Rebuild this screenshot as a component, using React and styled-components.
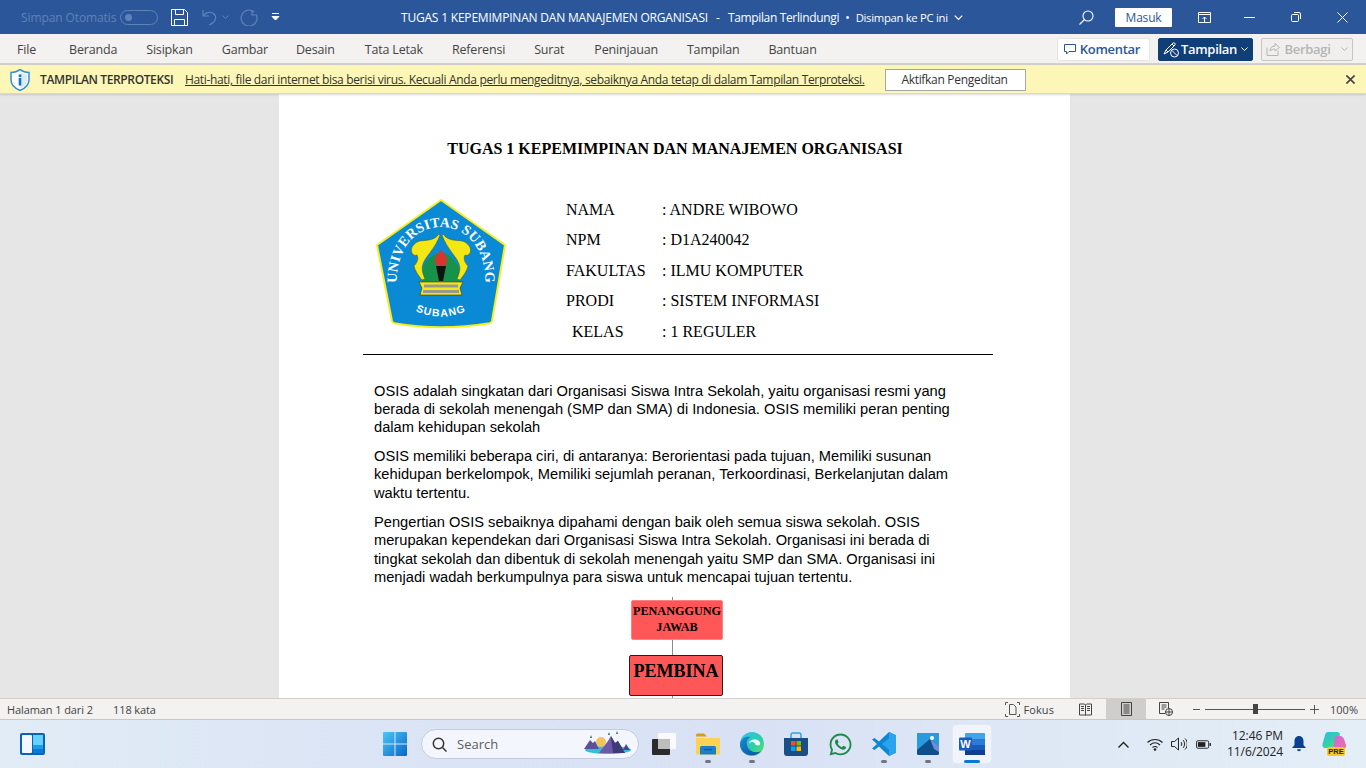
import styled, { createGlobalStyle } from "styled-components";
import { FaWhatsapp } from "react-icons/fa";

const uiFont = `"Open Sans", "Noto Sans", sans-serif`;

const Global = createGlobalStyle`
  html, body { margin: 0; padding: 0; height: 100%; overflow: hidden; }
  body { font-family: ${uiFont}; }
  #root { height: 768px; }
  svg { display: block; flex: none; }
`;

const Screen = styled.div`
  width: 1366px;
  height: 768px;
  display: flex;
  flex-direction: column;
  overflow: hidden;
`;

/* ---------- title bar ---------- */
const TitleBar = styled.header`
  height: 34px;
  flex: none;
  background: #2b579a;
  color: #fff;
  display: flex;
  align-items: center;
  font-size: 12px;
`;
const Qat = styled.div`
  width: 401px;
  flex: none;
  display: flex;
  align-items: center;
  padding-left: 21px;
  box-sizing: border-box;
`;
const AutoSave = styled.span`
  color: #5f83b9;
  width: 99px;
  letter-spacing: -0.1px;
`;
const Toggle = styled.span`
  width: 38px;
  height: 15px;
  box-sizing: border-box;
  border: 1px solid #5f83b9;
  border-radius: 8px;
  display: flex;
  align-items: center;
  padding-left: 4px;
  margin-right: 13px;
  &::before {
    content: "";
    width: 7px;
    height: 7px;
    border-radius: 50%;
    background: #5f83b9;
  }
`;
const Spaced = styled.span`
  margin-left: ${(p) => p.$gap || 0}px;
  display: flex;
`;
const DocTitle = styled.div`
  white-space: nowrap;
  display: flex;
  align-items: center;
`;
const TitlePart = styled.span`
  margin-left: ${(p) => p.$gap || 0}px;
  letter-spacing: ${(p) => p.$track}px;
  font-size: ${(p) => p.$size || 12}px;
`;
const TitleRight = styled.div`
  margin-left: auto;
  display: flex;
  align-items: center;
  padding-right: 18px;
`;
const SignIn = styled.button`
  width: 57px;
  height: 19px;
  margin: 0 26px 0 21px;
  padding: 0;
  border: 0;
  border-radius: 1px;
  background: #fff;
  color: #2b579a;
  font: 12px ${uiFont};
  letter-spacing: -0.2px;
`;

/* ---------- ribbon ---------- */
const Ribbon = styled.nav`
  height: 31px;
  flex: none;
  box-sizing: border-box;
  background: #f3f2f1;
  border-bottom: 2px solid #d2d0ce;
  display: flex;
  align-items: center;
  padding: 1px 13px 0 17px;
`;
const Tab = styled.span`
  font-size: 12.5px;
  color: #444;
  letter-spacing: -0.18px;
  margin-right: ${(p) => p.$gap || 29}px;
  white-space: nowrap;
`;
const RibbonActions = styled.div`
  margin-left: auto;
  display: flex;
  align-items: center;
  gap: 8px;
`;
const ActionButton = styled.div`
  height: 23px;
  width: ${(p) => p.$w}px;
  box-sizing: border-box;
  display: flex;
  align-items: center;
  justify-content: center;
  gap: ${(p) => p.$gap ?? 4}px;
  padding-right: ${(p) => p.$pad || 0}px;
  border-radius: 2px;
  font-size: 13px;
  font-weight: 600;
  letter-spacing: -0.3px;
  background: ${(p) => p.$bg};
  color: ${(p) => p.$color};
  border: 1px solid ${(p) => p.$border || p.$bg};
`;

/* ---------- protected view bar ---------- */
const InfoBar = styled.div`
  height: 29px;
  flex: none;
  box-sizing: border-box;
  background: #fcf7b6;
  border-bottom: 1px solid #e1dc9f;
  box-shadow: 0 1px 2px rgba(0, 0, 0, 0.14);
  display: flex;
  align-items: center;
  padding: 1px 11px 0 10px;
  font-size: 12px;
  color: #333;
  position: relative;
  z-index: 1;
`;
const InfoLabel = styled.span`
  margin-left: 10px;
  width: 145px;
  font-weight: 600;
  letter-spacing: -0.38px;
  white-space: nowrap;
`;
const InfoLink = styled.span`
  width: 700px;
  text-decoration: underline;
  letter-spacing: -0.335px;
  white-space: nowrap;
`;
const EnableButton = styled.button`
  width: 141px;
  height: 22px;
  padding: 0 2px 0 0;
  background: #fff;
  border: 1px solid #a6a6a6;
  color: #333;
  font: 12px ${uiFont};
  letter-spacing: -0.3px;
`;
const CloseX = styled.span`
  margin-left: auto;
  display: flex;
`;

/* ---------- document ---------- */
const Workspace = styled.main`
  flex: 1;
  min-height: 0;
  background: #e6e6e6;
  overflow: hidden;
  display: flex;
  padding-left: 279px;
`;
const Page = styled.article`
  width: 791px;
  height: 700px;
  flex: none;
  box-sizing: border-box;
  background: #fff;
  padding-top: 46px;
  font-family: "Liberation Serif", serif;
  color: #000;
`;
const DocHeading = styled.h1`
  margin: 0;
  font-size: 16px;
  line-height: 18px;
  font-weight: 700;
  text-align: center;
  padding-left: 1px;
`;
const Identity = styled.section`
  display: flex;
  margin: 35px 77px 0 84px;
  padding: 0 0 7px 13px;
  border-bottom: 1px solid #000;
  height: 154px;
`;
const LogoWrap = styled.div`
  width: 190px;
  flex: none;
  padding-top: 5px;
`;
const InfoGrid = styled.dl`
  margin: 1.7px 0 0;
  display: grid;
  grid-template-columns: 96px auto;
  grid-auto-rows: 30.5px;
  align-items: center;
  font-size: 16px;
`;
const Term = styled.dt`
  padding-left: ${(p) => (p.$indent ? 6 : 0)}px;
`;
const Value = styled.dd`
  margin: 0;
`;
const Body = styled.section`
  width: 590px;
  margin: 26.7px 0 0 95px;
  font-family: "Liberation Sans", sans-serif;
  font-size: 14.67px;
  line-height: 18.3px;
`;
const Para = styled.p`
  margin: 0 0 ${(p) => p.$after || 10.5}px;
`;
const OrgChart = styled.div`
  margin-top: 3px;
  display: flex;
  flex-direction: column;
  align-items: flex-start;
  padding-left: 350px;
`;
const OrgLine = styled.i`
  display: block;
  width: 1px;
  height: ${(p) => p.$h}px;
  background: #8a8a8a;
  margin-left: 43px;
`;
const OrgBox = styled.div`
  box-sizing: border-box;
  width: ${(p) => p.$w}px;
  height: ${(p) => p.$h}px;
  margin-left: ${(p) => p.$left || 0}px;
  background: #ff5757;
  border: ${(p) => (p.$strong ? "1px solid #222" : "1px solid #ff8080")};
  border-radius: 2px;
  display: flex;
  align-items: center;
  justify-content: center;
  text-align: center;
  font-weight: 700;
  font-size: ${(p) => p.$size}px;
  line-height: ${(p) => p.$line || 1.2};
  padding-bottom: ${(p) => (p.$strong ? 7 : 0)}px;
`;

/* ---------- status bar ---------- */
const StatusBar = styled.footer`
  height: 22px;
  flex: none;
  box-sizing: border-box;
  background: #f3f2f1;
  border-top: 1px solid #d2d0ce;
  border-bottom: 1px solid #c8c8c8;
  display: flex;
  align-items: center;
  font-size: 11px;
  color: #444;
  padding-left: 7px;
  position: relative;
  z-index: 1;
`;
const StatusText = styled.span`
  width: ${(p) => p.$w}px;
  letter-spacing: -0.1px;
  white-space: nowrap;
`;
const StatusRight = styled.div`
  margin-left: auto;
  display: flex;
  align-items: center;
  height: 100%;
  padding-right: 8px;
`;
const FocusLabel = styled.span`
  margin: 0 25px 0 3px;
  letter-spacing: 0.1px;
`;
const ViewButton = styled.span`
  width: 40px;
  align-self: stretch;
  margin: 0 13px 0 14px;
  display: flex;
  align-items: center;
  justify-content: center;
  background: #cfcecd;
`;
const ZoomSlider = styled.span`
  width: 100px;
  height: 1px;
  margin: 0 5px;
  background: #555;
  display: flex;
  align-items: center;
  justify-content: center;
  &::after {
    content: "";
    width: 5px;
    height: 10px;
    background: #444;
  }
`;
const ZoomValue = styled.span`
  margin-left: 11px;
`;

/* ---------- taskbar ---------- */
const Taskbar = styled.div`
  height: 48px;
  flex: none;
  display: flex;
  align-items: center;
  background: linear-gradient(90deg, #e1ecf6 0%, #dbe5f5 25%, #d9e2f5 55%, #dfe9f5 80%, #e3eef7 100%);
`;
const Widgets = styled.span`
  width: 383px;
  padding-left: 20px;
  box-sizing: border-box;
  flex: none;
`;
const Start = styled.span`
  width: 24px;
  flex: none;
  margin-right: 14px;
`;
const SearchBox = styled.div`
  width: 218px;
  height: 30px;
  box-sizing: border-box;
  flex: none;
  border-radius: 15px;
  background: #f3f6fd;
  border: 1px solid #c4cbe0;
  display: flex;
  align-items: center;
  padding: 0 4px 0 10px;
  font-size: 13px;
  color: #5d5d5d;
`;
const SearchLabel = styled.span`
  margin-left: 10px;
  flex: 1;
`;
const TaskSlot = styled.span`
  width: 44px;
  height: 38px;
  flex: none;
  margin-left: ${(p) => p.$offset || 0}px;
  display: flex;
  align-items: center;
  justify-content: center;
  position: relative;
  border-radius: 4px;
`;
const ActiveSlot = styled(TaskSlot)`
  width: 38px;
  margin: 0 3px;
  background: #f1f4fb;
  box-shadow: 0 0 0 1px #e4e9f3;
`;
const RunDot = styled.i`
  position: absolute;
  left: 50%;
  bottom: 0;
  transform: translateX(-50%);
  width: ${(p) => (p.$active ? 16 : 6)}px;
  height: 3px;
  border-radius: 2px;
  background: ${(p) => (p.$active ? "#0a78d6" : "#70757e")};
`;
const Tray = styled.div`
  margin-left: auto;
  display: flex;
  align-items: center;
  padding-right: 20px;
`;
const Clock = styled.div`
  width: 68px;
  margin-left: 4px;
  text-align: right;
  font-size: 12px;
  line-height: 16px;
  color: #222;
  letter-spacing: -0.1px;
`;

/* ---------- icons ---------- */
const Line = ({ w = 16, h = 16, vb, color = "#fff", sw = 1, children }) => (
  <svg width={w} height={h} viewBox={vb || `0 0 ${w} ${h}`} fill="none" stroke={color} strokeWidth={sw}>
    {children}
  </svg>
);

const SaveIcon = () => (
  <Line w={17} h={17}>
    <path d="M.5.5h13l3 3v13H.5zM4.500.5v5h8v-5M3.500 16.500v-6h10v6" />
  </Line>
);
const UndoIcon = () => (
  <Line w={17} h={17} color="#5f83b9" sw={1.2}>
    <path d="M1 1v6h6M1 7c3-4 8-5 11-2 3 3 2 8-5 11" />
  </Line>
);
const RedoIcon = () => (
  <Line w={18} h={17} color="#5f83b9" sw={1.2}>
    <path d="M12 1v5h5M16.500 6A8 8 0 1 1 9 1c2 0 4 1 5 2" />
  </Line>
);
const Chevron = ({ color = "#fff", w = 7, h = 4 }) => (
  <Line w={w} h={h} vb="0 0 7 4" color={color}>
    <path d="M.5.5l3 3 3-3" />
  </Line>
);
const ChevronUp = () => (
  <Line w={11} h={7} color="#222" sw={1.4}>
    <path d="M.5 6.500l5-5 5 5" />
  </Line>
);
const CustomizeIcon = () => (
  <Line w={9} h={8}>
    <path d="M1 .5h7" />
    <path d="M1 3.500l3.500 3.500L8 3.500z" fill="#fff" />
  </Line>
);
const SearchGlass = ({ color = "#fff", s = 15, sw = 1.1 }) => (
  <Line w={s} h={s} vb="0 0 15 15" color={color} sw={sw}>
    <circle cx="9" cy="6" r="5" />
    <path d="M5.500 9.500L.5 14.500" />
  </Line>
);
const TaskbarGlass = () => (
  <Line w={15} h={15} color="#333" sw={1.5}>
    <circle cx="6.500" cy="6.500" r="5.200" />
    <path d="M10.500 10.500l4 4" />
  </Line>
);
const PresentIcon = () => (
  <Line w={13} h={11}>
    <path d="M.5.5h12v10H.5zM.5 2.500h12" />
    <path d="M6.500 10V5M4.500 7l2-2 2 2" />
  </Line>
);
const MinimizeIcon = () => (
  <Line w={11} h={1}>
    <path d="M0 .5h11" />
  </Line>
);
const RestoreIcon = () => (
  <Line w={10} h={10}>
    <rect x=".5" y="2.500" width="7" height="7" rx="1" />
    <path d="M3 .5h5a1.500 1.500 0 0 1 1.500 1.500v5" />
  </Line>
);
const CloseIcon = ({ s = 11, color = "#fff", sw = 1 }) => (
  <Line w={s} h={s} vb="0 0 11 11" color={color} sw={sw}>
    <path d="M.5.5l10 10M10.500.5l-10 10" />
  </Line>
);
const CommentIcon = () => (
  <Line w={12} h={12} color="#2b579a">
    <path d="M.5 1.500h11v7H5l-2.500 2.500v-2.500h-2z" />
  </Line>
);
const EditViewIcon = () => (
  <svg width="17" height="17" viewBox="0 0 17 17" fill="none" stroke="#fff" strokeWidth="1">
    <path d="M1 13l2-4 7-7c1-1 3 1 2 2l-7 7z" />
    <path d="M3 9l2 2M9 3l2 2" />
    <circle cx="11.500" cy="12" r="4" fill="#103f78" />
    <path d="M8.800 9.300l5.400 5.400" />
  </svg>
);
const ShareIcon = () => (
  <Line w={14} h={14} color="#b5b5b5">
    <path d="M1 5.500v8h11v-5M4 9c0-3 2-5 5-5V1.500l4.500 4L9 9V7C7 7 5 8 4 9z" />
  </Line>
);
const ShieldIcon = () => (
  <svg width="20" height="22" viewBox="0 0 20 22">
    <path d="M10 .5c2.500 2 6 3 9 3v7.500c0 4.500-3.500 8-9 10.500C4.500 19 1 15.500 1 11V3.500c3 0 6.500-1 9-3z" fill="#fff" stroke="#2f8fdb" strokeWidth="1.500" />
    <path d="M10 3c2 1.300 4.500 2 7 2.300V11c0 3.500-3 6.500-7 8.500z" fill="#d5ecfb" />
    <rect x="8.700" y="5.500" width="2.600" height="2.600" fill="#1f6fb5" />
    <rect x="8.700" y="9" width="2.600" height="7.500" fill="#1f6fb5" />
  </svg>
);
const FocusIcon = () => (
  <svg width="15" height="15" viewBox="0 0 15 15" fill="none" stroke="#555">
    <path d="M.5 3V.5H3M12 .5h2.500V3M.5 12v2.500H3M12 14.500h2.500V12" />
    <path d="M4.500 12.500v-10h4l2.500 2.500v7.500z" />
  </svg>
);
const ReadIcon = () => (
  <Line w={13} h={13} color="#444">
    <path d="M.5 1h5l1 1 1-1h5v11h-5l-1 .5-1-.5h-5zM6.500 2v10M2 3.500h3M2 5.500h3M2 7.500h3M8 3.500h3M8 5.500h3M8 7.500h3" />
  </Line>
);
const PrintIcon = () => (
  <Line w={11} h={14} color="#444">
    <path d="M.5.5h10v13H.5zM2.500 3h6M2.500 5h6M2.500 7h6M2.500 9h6M2.500 11h6" />
  </Line>
);
const WebIcon = () => (
  <svg width="14" height="14" viewBox="0 0 14 14" fill="none" stroke="#444">
    <path d="M.5.5h9v7M.5.5v11h6M2.500 3h5M2.500 5h5M2.500 7h3" />
    <circle cx="10" cy="10" r="3.500" fill="#f3f2f1" />
    <path d="M6.500 10h7M10 6.500v7" />
  </svg>
);
const ZoomMinus = () => (
  <Line w={7} h={1} color="#555">
    <path d="M0 .5h7" />
  </Line>
);
const ZoomPlus = () => (
  <Line w={9} h={9} color="#555">
    <path d="M0 4.500h9M4.500 0v9" />
  </Line>
);
const WidgetsIcon = () => (
  <svg width="25" height="22" viewBox="0 0 25 22">
    <rect width="25" height="22" rx="2" fill="#0b63b4" />
    <rect x="2" y="2" width="10" height="18" rx="1" fill="#f4f8fb" />
    <rect x="13" y="2" width="10" height="10" fill="#64d2ff" />
    <rect x="13" y="12" width="10" height="4" fill="#1b9cf0" />
    <rect x="13" y="16" width="10" height="4" fill="#0a7bd4" />
  </svg>
);
const WinLogo = () => (
  <svg width="24" height="24" viewBox="0 0 24 24">
    <defs>
      <linearGradient id="win" x1="0" y1="0" x2="1" y2="1">
        <stop offset="0" stopColor="#4fc7f7" />
        <stop offset="1" stopColor="#0467c8" />
      </linearGradient>
    </defs>
    <path d="M0 1a1 1 0 0 1 1-1h10.500v11.500H0zM12.500 0H23a1 1 0 0 1 1 1v10.500H12.500zM0 12.500h11.500V24H1a1 1 0 0 1-1-1zM12.500 12.500H24V23a1 1 0 0 1-1 1H12.500z" fill="url(#win)" />
  </svg>
);
const Scenery = () => (
  <svg width="52" height="30" viewBox="0 0 52 30">
    <ellipse cx="26" cy="21" rx="23" ry="4" fill="#33c0d6" />
    <circle cx="19" cy="13" r="5" fill="#f4c25b" />
    <path d="M2 20l6-9 3 3 2-2 4 8z" fill="#5b4f9e" />
    <path d="M17 24l9-12 3-5 4 7 3-2 7 12z" fill="#6a5aa8" />
    <path d="M29 7l4 7 3-2 7 12H31z" fill="#3c3a78" />
    <path d="M41 21l3-6 4 6z" fill="#4a4590" />
    <path d="M26 6l1-3 1 3zM34 5l1-3 1 3zM8 9l1-3 1 3z" fill="#2f6b3f" />
  </svg>
);
const TaskViewIcon = () => (
  <svg width="24" height="22" viewBox="0 0 24 22">
    <rect x="0" y="6" width="18" height="16" rx="1" fill="#2b2b2b" />
    <rect x="6" y="0" width="18" height="16" rx="1" fill="#fafafa" />
    <rect x="6" y="6" width="12" height="10" fill="#bdbdbd" />
  </svg>
);
const FolderIcon = () => (
  <svg width="24" height="22" viewBox="0 0 24 22">
    <path d="M0 2a1.500 1.500 0 0 1 1.500-1.500H8l3 3h-11z" fill="#d79b1d" />
    <path d="M0 5h24v15a1.500 1.500 0 0 1-1.500 1.500h-21A1.500 1.500 0 0 1 0 20z" fill="#fcd254" />
    <path d="M4 14.500a1.500 1.500 0 0 1 1.500-1.500h13a1.500 1.500 0 0 1 1.500 1.500v7H4z" fill="#1a7fc4" />
    <rect x="8" y="16" width="8" height="1.200" fill="#0d5c96" />
  </svg>
);
const EdgeIcon = () => (
  <svg width="24" height="24" viewBox="0 0 24 24">
    <defs>
      <linearGradient id="edgeA" x1="0" y1="0" x2="1" y2="1">
        <stop offset="0" stopColor="#35c1f1" />
        <stop offset=".6" stopColor="#2ad0a2" />
        <stop offset="1" stopColor="#6fe25f" />
      </linearGradient>
      <linearGradient id="edgeB" x1="0" y1="0" x2="1" y2="1">
        <stop offset="0" stopColor="#1c8ad6" />
        <stop offset="1" stopColor="#0c4f9a" />
      </linearGradient>
    </defs>
    <circle cx="12" cy="12" r="12" fill="url(#edgeA)" />
    <path d="M0 12C1 6 6 4 11 5c-3 1-5 4-4 8 1 5 6 8 11 7 1 0 2-.5 3-1-3 4-8 5-12 4C4 22 0 18 0 12z" fill="url(#edgeB)" />
    <path d="M9 12c0-3 3-5 7-4.500 3 .5 5 3 4 5-1 1.500-5 1-5-.5 0-1-1-2-3-2-1.500 0-3 1-3 2z" fill="#f3f6fb" opacity=".95" />
  </svg>
);
const StoreIcon = () => (
  <svg width="24" height="25" viewBox="0 0 24 25">
    <path d="M7 7V3a2 2 0 0 1 2-2h6a2 2 0 0 1 2 2v4" fill="none" stroke="#29a8e0" strokeWidth="1.500" />
    <path d="M0 6h24v15a3 3 0 0 1-3 3H3a3 3 0 0 1-3-3z" fill="#1a4e86" />
    <rect x="7" y="9" width="4.500" height="4.500" fill="#f25022" />
    <rect x="12.500" y="9" width="4.500" height="4.500" fill="#7fba00" />
    <rect x="7" y="14.500" width="4.500" height="4.500" fill="#00a4ef" />
    <rect x="12.500" y="14.500" width="4.500" height="4.500" fill="#ffb900" />
  </svg>
);
const VSCodeIcon = () => (
  <svg width="24" height="24" viewBox="0 0 24 24">
    <path d="M17 0l7 3.200v17.600L17 24 7 14.500 2.500 18 0 16.500 5 12 0 7.500 2.500 6 7 9.500z" fill="#0f86d2" />
    <path d="M17 0l7 3.200v17.600L17 24zM17 6.500L10 12l7 5.500z" fill="#2aa4ec" fillRule="evenodd" />
  </svg>
);
const PhotosIcon = () => (
  <svg width="22" height="22" viewBox="0 0 22 22">
    <rect width="22" height="22" rx="1.500" fill="#0f4f8c" />
    <path d="M0 0h22v13L13 6 0 17z" fill="#2a9adf" />
    <path d="M13 6l9 7v6l-5-3z" fill="#6a8fd8" />
    <circle cx="15" cy="5" r="2" fill="#fff" />
  </svg>
);
const WordIcon = () => (
  <svg width="26" height="24" viewBox="0 0 26 24">
    <rect x="6" y="1" width="20" height="22" rx="1" fill="#41a5ee" />
    <rect x="6" y="7" width="20" height="6" fill="#2b7cd3" />
    <rect x="6" y="13" width="20" height="5" fill="#185abd" />
    <rect x="6" y="18" width="20" height="5" fill="#103f91" />
    <rect x="0" y="5.500" width="13" height="13" rx="1" fill="#1a5cbe" />
    <text x="6.500" y="16" textAnchor="middle" fontFamily="Liberation Sans, sans-serif" fontWeight="700" fontSize="11" fill="#fff">W</text>
  </svg>
);
const WifiIcon = () => (
  <Line w={16} h={13} color="#222" sw={1.100}>
    <path d="M.5 4.500c4-4 11-4 15 0M3 7c3-2.700 7-2.700 10 0M5.500 9.500c1.500-1.200 3.500-1.200 5 0" />
    <circle cx="8" cy="11.500" r=".8" fill="#222" />
  </Line>
);
const VolumeIcon = () => (
  <Line w={16} h={14} color="#222">
    <path d="M.5 4.500h3l4-3.500v12l-4-3.500h-3zM10 5c1 1 1 3 0 4M12 3c2 2 2 6 0 8M14 1.500c3 3 3 8 0 11" />
  </Line>
);
const BatteryIcon = () => (
  <svg width="15" height="9" viewBox="0 0 16 9">
    <rect x=".5" y=".5" width="13" height="8" rx="1.500" fill="none" stroke="#222" />
    <rect x="2" y="2" width="8" height="5" fill="#222" />
    <rect x="14.500" y="3" width="1.500" height="3" fill="#222" />
  </svg>
);
const BellIcon = () => (
  <svg width="14" height="16" viewBox="0 0 14 16">
    <path d="M7 0c3 0 4.500 2.500 4.500 5v4l2.500 3H0l2.500-3V5C2.500 2.500 4 0 7 0z" fill="#0b3f96" />
    <path d="M5 13.200h4a2 2 0 0 1-4 0z" fill="#0b3f96" />
  </svg>
);
const CopilotIcon = () => (
  <svg width="24" height="24" viewBox="0 0 24 24">
    <defs>
      <linearGradient id="copA" x1="0" y1="0" x2="1" y2="1">
        <stop offset="0" stopColor="#35b6f0" />
        <stop offset=".6" stopColor="#2fd6a0" />
        <stop offset="1" stopColor="#c8d34a" />
      </linearGradient>
      <linearGradient id="copB" x1="0" y1="0" x2="1" y2="1">
        <stop offset="0" stopColor="#c06be0" />
        <stop offset="1" stopColor="#f3709a" />
      </linearGradient>
    </defs>
    <path d="M6 0h9c2 0 3 1 3 3L11 16H3c-2 0-3-2-2.500-4L3 3C3.500 1 4.500 0 6 0z" fill="url(#copA)" />
    <path d="M13 4h5c2 0 3 1 4 3l2 6c.5 2-1 4-3 4h-10z" fill="url(#copB)" />
    <rect x="5" y="15" width="18" height="9" rx="2" fill="#f8c91f" />
    <text x="14" y="22.300" textAnchor="middle" fontFamily="Liberation Sans, sans-serif" fontWeight="700" fontSize="7.500" fill="#222">PRE</text>
  </svg>
);

/* Drawn campus crest; lettering stays as real svg text on a curve */
const UniversityLogo = () => (
  <svg width="130" height="132" viewBox="0 0 130 132">
    <defs>
      <path id="crestTop" d="M21 91C18 52 39 29 65 29c26 0 47 23 44 62" />
      <path id="crestBottom" d="M35 111Q65 126 95 111" />
    </defs>
    <path d="M65 2l64 45-13 76c-.5 1.500-1 2-2.500 2.300-31 5-66 5-95 0-1.500-.3-2-.8-2.500-2.300L1 47z" fill="#0a8ad4" stroke="#f7ef1d" strokeWidth="2" strokeLinejoin="round" />
    <text fontFamily="Liberation Serif, serif" fontWeight="700" fontSize="14" fill="#fff" textAnchor="middle" letterSpacing=".2">
      <textPath href="#crestTop" startOffset="50%">UNIVERSITAS SUBANG</textPath>
    </text>
    <text fontFamily="Liberation Sans, sans-serif" fontWeight="700" fontSize="10.500" fill="#fff" textAnchor="middle" letterSpacing="1.200">
      <textPath href="#crestBottom" startOffset="50%">SUBANG</textPath>
    </text>
    <path d="M46 83c-2-14 7-28 19-28s21 14 19 28z" fill="#17924a" />
    <path d="M63 36c-5 7-12 6-19 7-7 2-10 8-8 12 1 2 3 3 5 2 2 4 0 8-3 11 1 5 5 10 8 14l3-1c-2-5-4-10-2-15 2-7 12-15 17-29-.5 0-1-1-1-1z" fill="#f4e814" stroke="#3a3a10" strokeWidth=".4" />
    <path d="M67 36c5 7 12 6 19 7 7 2 10 8 8 12-1 2-3 3-5 2-2 4 0 8 3 11-1 5-5 10-8 14l-3-1c2-5 4-10 2-15-2-7-12-15-17-29 .5 0 1-1 1-1z" fill="#f4e814" stroke="#3a3a10" strokeWidth=".4" />
    <path d="M65 52c5 5 7 9 6 12-1 3-3 4-6 4s-5-1-6-4c-1-3 1-7 6-12z" fill="#d8352f" />
    <path d="M60 68h10l-3 15h-4z" fill="#111" />
    <path d="M43 84h44l-3 6 2 7H44l2-7z" fill="#f4e814" stroke="#333" strokeWidth=".6" />
    <path d="M48 86.500h34v3H48zM47 92h36v3H47z" fill="#9a9a8c" />
  </svg>
);

const tabs = [
  ["File", 33],
  ["Beranda"],
  ["Sisipkan"],
  ["Gambar", 28],
  ["Desain", 30],
  ["Tata Letak", 29],
  ["Referensi"],
  ["Surat", 30],
  ["Peninjauan", 29],
  ["Tampilan", 29],
  ["Bantuan"],
];

const identity = [
  ["NAMA", ": ANDRE WIBOWO"],
  ["NPM", ": D1A240042"],
  ["FAKULTAS", ": ILMU KOMPUTER"],
  ["PRODI", ": SISTEM INFORMASI"],
  ["KELAS", ": 1 REGULER", true],
];

const apps = [
  { id: "folder", icon: <FolderIcon />, running: true },
  { id: "edge", icon: <EdgeIcon />, running: true },
  { id: "store", icon: <StoreIcon /> },
  { id: "whatsapp", icon: <FaWhatsapp size={25} color="#1f8a4c" /> },
  { id: "vscode", icon: <VSCodeIcon />, running: true },
  { id: "photos", icon: <PhotosIcon />, running: true },
];

export default function App() {
  return (
    <Screen>
      <Global />
      <TitleBar>
        <Qat>
          <AutoSave>Simpan Otomatis</AutoSave>
          <Toggle />
          <SaveIcon />
          <Spaced $gap={14}><UndoIcon /></Spaced>
          <Spaced $gap={3}><Chevron color="#5f83b9" /></Spaced>
          <Spaced $gap={11}><RedoIcon /></Spaced>
          <Spaced $gap={13}><CustomizeIcon /></Spaced>
        </Qat>
        <DocTitle>
          <TitlePart $track={-0.2}>TUGAS 1 KEPEMIMPINAN DAN MANAJEMEN ORGANISASI</TitlePart>
          <TitlePart $track={0} $gap={8}>-</TitlePart>
          <TitlePart $track={-0.35} $gap={8}>Tampilan Terlindungi</TitlePart>
          <TitlePart $track={0} $gap={6}>•</TitlePart>
          <TitlePart $track={-0.3} $size={11.3} $gap={6}>Disimpan ke PC ini</TitlePart>
          <Spaced $gap={6}><Chevron w={9} h={5} /></Spaced>
        </DocTitle>
        <TitleRight>
          <SearchGlass />
          <SignIn>Masuk</SignIn>
          <PresentIcon />
          <Spaced $gap={33}><MinimizeIcon /></Spaced>
          <Spaced $gap={36}><RestoreIcon /></Spaced>
          <Spaced $gap={36}><CloseIcon /></Spaced>
        </TitleRight>
      </TitleBar>

      <Ribbon>
        {tabs.map(([label, gap]) => (
          <Tab key={label} $gap={gap}>{label}</Tab>
        ))}
        <RibbonActions>
          <ActionButton $w={93} $pad={3} $bg="#fff" $border="#e6e5e4" $color="#2b579a">
            <CommentIcon />
            Komentar
          </ActionButton>
          <ActionButton $w={95} $bg="#103f78" $color="#fff" $gap={1}>
            <EditViewIcon />
            Tampilan
            <Spaced $gap={3}><Chevron /></Spaced>
          </ActionButton>
          <ActionButton $w={92} $bg="#f0efee" $border="#c8c6c4" $color="#b5b5b5">
            <ShareIcon />
            Berbagi
            <Spaced $gap={6}><Chevron color="#b5b5b5" /></Spaced>
          </ActionButton>
        </RibbonActions>
      </Ribbon>

      <InfoBar>
        <ShieldIcon />
        <InfoLabel>TAMPILAN TERPROTEKSI</InfoLabel>
        <InfoLink>Hati-hati, file dari internet bisa berisi virus. Kecuali Anda perlu mengeditnya, sebaiknya Anda tetap di dalam Tampilan Terproteksi.</InfoLink>
        <EnableButton>Aktifkan Pengeditan</EnableButton>
        <CloseX><CloseIcon s={9} color="#444" sw={2} /></CloseX>
      </InfoBar>

      <Workspace>
        <Page>
          <DocHeading>TUGAS 1 KEPEMIMPINAN DAN MANAJEMEN ORGANISASI</DocHeading>
          <Identity>
            <LogoWrap><UniversityLogo /></LogoWrap>
            <InfoGrid>
              {identity.map(([term, value, indent]) => [
                <Term key={term} $indent={indent}>{term}</Term>,
                <Value key={value}>{value}</Value>,
              ])}
            </InfoGrid>
          </Identity>
          <Body>
            <Para>OSIS adalah singkatan dari Organisasi Siswa Intra Sekolah, yaitu organisasi resmi yang berada di sekolah menengah (SMP dan SMA) di Indonesia. OSIS memiliki peran penting dalam kehidupan sekolah</Para>
            <Para $after={11.2}>OSIS memiliki beberapa ciri, di antaranya: Berorientasi pada tujuan, Memiliki susunan kehidupan berkelompok, Memiliki sejumlah peranan, Terkoordinasi, Berkelanjutan dalam waktu tertentu.</Para>
            <Para>Pengertian OSIS sebaiknya dipahami dengan baik oleh semua siswa sekolah. OSIS merupakan kependekan dari Organisasi Siswa Intra Sekolah. Organisasi ini berada di tingkat sekolah dan dibentuk di sekolah menengah yaitu SMP dan SMA. Organisasi ini menjadi wadah berkumpulnya para siswa untuk mencapai tujuan tertentu.</Para>
          </Body>
          <OrgChart>
            <OrgLine $h={3} />
            <OrgBox $w={92} $h={40} $left={2} $size={12.2} $line={1.3}>PENANGGUNG<br />JAWAB</OrgBox>
            <OrgLine $h={15} />
            <OrgBox $w={94} $h={41} $size={18} $strong>PEMBINA</OrgBox>
            <OrgLine $h={5} />
          </OrgChart>
        </Page>
      </Workspace>

      <StatusBar>
        <StatusText $w={106}>Halaman 1 dari 2</StatusText>
        <StatusText>118 kata</StatusText>
        <StatusRight>
          <FocusIcon />
          <FocusLabel>Fokus</FocusLabel>
          <ReadIcon />
          <ViewButton><PrintIcon /></ViewButton>
          <WebIcon />
          <Spaced $gap={20}><ZoomMinus /></Spaced>
          <ZoomSlider />
          <ZoomPlus />
          <ZoomValue>100%</ZoomValue>
        </StatusRight>
      </StatusBar>

      <Taskbar>
        <Widgets><WidgetsIcon /></Widgets>
        <Start><WinLogo /></Start>
        <SearchBox>
          <TaskbarGlass />
          <SearchLabel>Search</SearchLabel>
          <Scenery />
        </SearchBox>
        <TaskSlot $offset={3}><TaskViewIcon /></TaskSlot>
        {apps.map((app) => (
          <TaskSlot key={app.id}>
            {app.icon}
            {app.running && <RunDot />}
          </TaskSlot>
        ))}
        <ActiveSlot><WordIcon /><RunDot $active /></ActiveSlot>
        <Tray>
          <ChevronUp />
          <Spaced $gap={18}><WifiIcon /></Spaced>
          <Spaced $gap={8}><VolumeIcon /></Spaced>
          <Spaced $gap={9}><BatteryIcon /></Spaced>
          <Clock>12:46 PM<br />11/6/2024</Clock>
          <Spaced $gap={9}><BellIcon /></Spaced>
          <Spaced $gap={16}><CopilotIcon /></Spaced>
        </Tray>
      </Taskbar>
    </Screen>
  );
}
